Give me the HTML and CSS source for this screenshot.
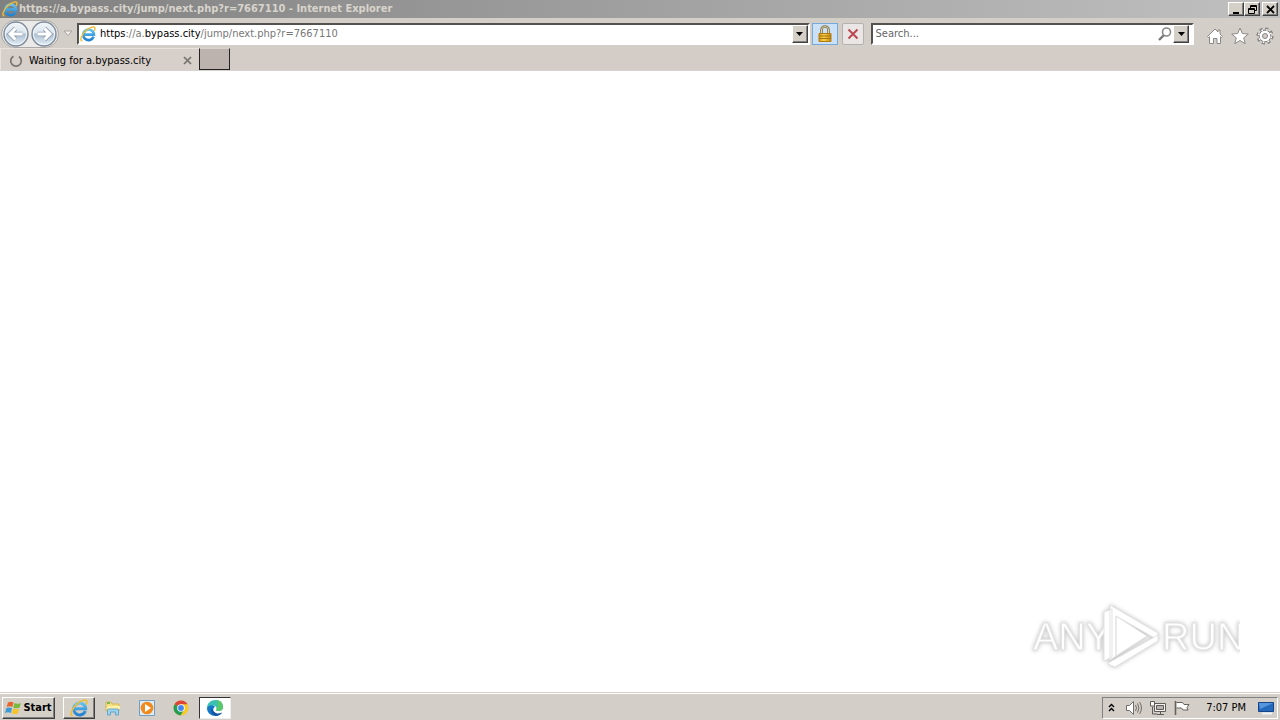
FILE: index.html
```html
<!DOCTYPE html>
<html lang="en">
<head>
<meta charset="utf-8">
<title>Internet Explorer</title>
<link rel="stylesheet" href="styles.css">
</head>
<body>
<svg width="0" height="0" class="defs" aria-hidden="true">
  <defs>
    <linearGradient id="blue" x1="0" y1="0" x2="0" y2="1"><stop offset="0" stop-color="#62c4f2"/><stop offset="1" stop-color="#2381cf"/></linearGradient>
    <linearGradient id="orb" x1="0" y1="0" x2="0" y2="1"><stop offset="0" stop-color="#f3f6f9"/><stop offset=".45" stop-color="#dce5ee"/><stop offset=".5" stop-color="#afbfd0"/><stop offset="1" stop-color="#e4f0f8"/></linearGradient>
    <linearGradient id="gold" x1="0" y1="0" x2="1" y2="0"><stop offset="0" stop-color="#d99a10"/><stop offset=".4" stop-color="#f8d24a"/><stop offset="1" stop-color="#c98a0c"/></linearGradient>
    <symbol id="ie" viewBox="0 0 16 16">
      <path d="M13.6 10.6A5.3 5.3 0 1 1 13.9 8.6H4" fill="none" stroke="url(#blue)" stroke-width="2.7"/>
      <path d="M2.3 14.8C-.8 14.8 1.600 8.600 6 4.600C10.200.8 14.800-.2 15 2.200C15.100 3.200 14.600 4.200 14 5" fill="none" stroke="#efbd32" stroke-width="1.400"/>
    </symbol>
    <symbol id="drop" viewBox="0 0 7 4"><path d="M0 0h7L3.500 4z" fill="#000"/></symbol>
  </defs>
</svg>
<div class="screen">
  <header class="titlebar">
    <svg class="i16"><use href="#ie"/></svg>
    <h1 class="title">https://a.bypass.city/jump/next.php?r=7667110 - Internet Explorer</h1>
    <div class="winbtns">
      <button class="raised winbtn" aria-label="Minimize"><svg width="11" height="9"><path d="M2 7h6v2H2z"/></svg></button>
      <button class="raised winbtn" aria-label="Restore"><svg width="11" height="9" fill="none" stroke="#000"><path d="M3.500 3V.5h6v5H8M3 1.500h7M1.500 3.500h6v5h-6zM1 4.500h7"/></svg></button>
      <button class="raised winbtn close" aria-label="Close"><svg width="11" height="9" fill="none" stroke="#000" stroke-width="1.800"><path d="M2 1l7 7M9 1L2 8"/></svg></button>
    </div>
  </header>
  <nav class="navbar">
    <div class="orbs">
      <button class="plain" aria-label="Back"><svg width="28" height="28" viewBox="0 0 28 28"><circle cx="14" cy="14" r="12" fill="url(#orb)" stroke="#7f8b98" stroke-width="1.400"/><circle cx="14" cy="14" r="10.600" fill="none" stroke="#eff7fc"/><path d="M20.500 14H8.500M13.500 8.500L8 14l5.500 5.500" fill="none" stroke="#8fa0b4" stroke-width="4.600"/><path d="M20.500 14H8.500M13.500 8.500L8 14l5.500 5.500" fill="none" stroke="#fff" stroke-width="3"/></svg></button>
      <button class="plain" aria-label="Forward"><svg width="28" height="28" viewBox="0 0 28 28"><circle cx="14" cy="14" r="12" fill="url(#orb)" stroke="#7f8b98" stroke-width="1.400"/><circle cx="14" cy="14" r="10.600" fill="none" stroke="#eff7fc"/><path d="M7.500 14h12M14.500 8.500L20 14l-5.500 5.500" fill="none" stroke="#8fa0b4" stroke-width="4.600"/><path d="M7.500 14h12M14.500 8.500L20 14l-5.500 5.500" fill="none" stroke="#fff" stroke-width="3"/></svg></button>
    </div>
    <button class="plain history" aria-label="Recent pages"><svg width="10" height="7"><path d="M1 1h8L5 5.500z" fill="#f2f0ee" stroke="#aaa5a0"/></svg></button>
    <div class="sunken address">
      <svg class="i16"><use href="#ie"/></svg>
      <div class="url" role="textbox" aria-label="Address" contenteditable="true" spellcheck="false"><span class="dark">https</span>://a.<span class="dark">bypass.city</span>/jump/next.php?r=7667110</div>
      <button class="raised dropbtn" aria-label="Show addresses"><svg width="7" height="4"><use href="#drop"/></svg></button>
    </div>
    <button class="tool lock" aria-label="Security report"><svg width="16" height="18" viewBox="0 0 16 18"><path d="M4.500 9V5a3.500 3.500 0 0 1 7 0v4" fill="none" stroke="#7d7149" stroke-width="2.600"/><path d="M4.500 9V5a3.500 3.500 0 0 1 7 0v4" fill="none" stroke="#ddd3a4"/><path d="M2 8.500h12v8H2z" fill="url(#gold)" stroke="#b27c10"/><path d="M2 11h12M2 13.500h12" stroke="#a87411"/></svg></button>
    <button class="tool stop" aria-label="Stop"><svg width="12" height="12"><path d="M1.500 1.500l9 9M10.500 1.500l-9 9" stroke="#bd4650" stroke-width="2"/></svg></button>
    <div class="sunken search">
      <input type="text" class="query" placeholder="Search..." aria-label="Search">
      <svg width="16" height="16" viewBox="0 0 16 16"><path d="M7 9l-5 5" stroke="#777" stroke-width="2.400"/><circle cx="9.500" cy="6" r="4" fill="#fff" stroke="#888" stroke-width="1.600"/></svg>
      <button class="raised dropbtn" aria-label="Search options"><svg width="7" height="4"><use href="#drop"/></svg></button>
    </div>
    <div class="commands">
      <button class="plain" aria-label="Home"><svg width="18" height="18" viewBox="0 0 18 18"><path d="M1.500 9.500L9 2l3 3V3h2v4l2.500 2.500-1 1-1-.8v6.800H11v-5H7.500v5h-4V9.700l-1 .8z" fill="#fff" stroke="#8b8987"/></svg></button>
      <button class="plain" aria-label="Favorites"><svg width="18" height="18" viewBox="0 0 18 18"><path d="M9 1l2.300 5.500 6 .5-4.600 3.900 1.500 5.800L9 13.500l-5.200 3.200 1.500-5.800L.7 7l6-.5z" fill="#fff" stroke="#8b8987"/></svg></button>
      <button class="plain" aria-label="Tools"><svg width="18" height="18" viewBox="0 0 18 18"><circle cx="9" cy="9" r="7" fill="none" stroke="#858381" stroke-width="3.200" stroke-dasharray="3 2.498"/><circle cx="9" cy="9" r="5.800" fill="#fff" stroke="#858381"/><circle cx="9" cy="9" r="6.300" fill="none" stroke="#fff" stroke-width="1.600" stroke-dasharray="1.500 3.448" stroke-dashoffset="-.5"/><circle cx="9" cy="9" r="2.500" fill="#d4cdc7" stroke="#858381"/></svg></button>
    </div>
  </nav>
  <div class="tabs">
    <div class="tab">
      <svg width="14" height="14" viewBox="0 0 14 14"><path d="M4.500 2.200A5.300 5.300 0 1 0 10 2.500" fill="none" stroke="#77736f" stroke-width="1.700"/></svg>
      <span class="tabname">Waiting for a.bypass.city</span>
      <button class="plain" aria-label="Close tab"><svg width="9" height="9"><path d="M1 1l7 7M8 1L1 8" stroke="#77736f" stroke-width="1.700"/></svg></button>
    </div>
    <button class="raised newtab" aria-label="New tab"></button>
  </div>
  <main class="page">
    <svg class="watermark" width="216" height="76" viewBox="0 0 216 76" role="img" aria-label="ANY RUN">
      <g class="mark">
        <text x="9" y="51">ANY</text>
        <g fill="#fff" stroke="#e3e3e3"><path d="M80 13l8-3v48l-8 4zM86 6l48 28v7L92 17v40l-6 4zM92 17l31 20-31 20z"/><path d="M86 63l48-27v6L91 68l-7-3z"/></g>
        <text x="138" y="51">RUN</text>
      </g>
    </svg>
  </main>
  <footer class="taskbar">
    <button class="raised start"><svg width="17" height="16" viewBox="0 0 17 16"><path d="M3 2.500Q6 .8 8.500 2.500L7.300 7Q4.500 5.500 1.700 7z" fill="#e8622c"/><path d="M9.500 3Q12.500 4.600 16 2.900L14.600 7.600Q11.500 9 8.300 7.400z" fill="#78b93b"/><path d="M1.400 8Q4.200 6.700 7 8.200L5.800 13Q3 11.500 0 13z" fill="#399bd8"/><path d="M8 8.500Q11 10 14.200 8.700L12.900 13.400Q9.800 14.800 6.800 13.200z" fill="#f6c32f"/></svg>Start</button>
    <div class="tasks">
      <button class="task raised" aria-label="Internet Explorer"><svg class="i18"><use href="#ie"/></svg></button>
      <button class="task" aria-label="Explorer"><svg width="18" height="18" viewBox="0 0 18 18"><path d="M2 3h5l1 2h7v7H2z" fill="#f5df83" stroke="#d5b84d"/><path d="M3 3h3v2H3z" fill="#76b85a"/><path d="M4 7h12v3H2z" fill="#fff0a6"/><path d="M3.500 16v-5q0-1 1-1h9q1 0 1 1v5h-3v-3h-5v3z" fill="#9bd2ed" stroke="#65a8cc"/></svg></button>
      <button class="task" aria-label="Media Player"><svg width="18" height="18" viewBox="0 0 18 18"><path d="M1.500 1.500h15v15h-15z" fill="#dcebf5" stroke="#729fc2"/><circle cx="9" cy="9" r="6.300" fill="#f18a1d"/><path d="M7 5l6 4-6 4z" fill="#fff"/></svg></button>
      <button class="task" aria-label="Chrome"><svg width="18" height="18" viewBox="0 0 18 18"><circle cx="9" cy="9" r="7.500" fill="#f9c927"/><path d="M9 9L2.500 5.250A7.500 7.500 0 0 1 15.500 5.250H9z" fill="#dc4437"/><path d="M2.500 5.250L9 9l3 2-3.500 5.500A7.500 7.500 0 0 1 2.500 5.250z" fill="#279c57"/><circle cx="9" cy="9" r="3.800" fill="#fff"/><circle cx="9" cy="9" r="2.900" fill="#4285ee"/></svg></button>
      <button class="task active" aria-label="Edge"><svg width="18" height="18" viewBox="0 0 18 18"><path d="M1 9C1 4 5 1 9.500 1S17 4 17 8c0 3-2 4-5 4-1.500 0-2-.5-1.500-1.500C11 8 9 6.500 7 6.500S2 8 1 9z" fill="#39c1b4"/><path d="M10 1c4.500 0 7 3 7 7 0 3-2 4-5 4-1.500 0-2-.5-1.500-1.500C11.500 6 13 4 10 1z" fill="#5bc76b"/><path d="M1 9c1-3 7-4 8-1-3 1-2 7 2.500 7 2 0 3.500-.8 4.500-1.500C13 19 1 18 1 9z" fill="#1678c8"/><path d="M6 9c-2 3 0 7 4 8 3-.3 5-1.700 6-3.500-5 2.500-9 0-10-4.500z" fill="#1553a0"/></svg></button>
    </div>
    <div class="tray">
      <button class="plain" aria-label="Show hidden icons"><svg width="7" height="9" fill="none" stroke="#000" stroke-width="1.400"><path d="M1 4l2.500-2.500L6 4M1 8l2.500-2.500L6 8"/></svg></button>
      <svg class="volume" width="18" height="16" viewBox="0 0 18 16" fill="none" stroke="#716d69"><path d="M1.500 5.500h3L8.500 1.500v13l-4-4h-3z" fill="#fff"/><path d="M10.500 5q2 3 0 6M12.500 3.500q3 4.500 0 9M14.500 2q4 6 0 12"/></svg>
      <svg width="18" height="16" viewBox="0 0 18 16" fill="none" stroke="#5f5b57"><path d="M5.500 3.500h11v8h-11z" fill="#f4f2ef"/><path d="M7.500 5.500h7v4h-7z" fill="#b8b3ae"/><path d="M8 14.500h7M11.500 12v2M3.500 7v7H8"/><path d="M1.500 1.500h4V6h-4z" fill="#fff"/></svg>
      <svg width="18" height="16" viewBox="0 0 18 16" fill="none" stroke="#65615d"><path d="M3.500 2.500h6l1.500 2h5l-2 3 1 2.500h-5l-1.500-2h-5" fill="#fff"/><path d="M2.500 1v14" stroke-width="1.600"/></svg>
      <time class="clock">7:07 PM</time>
      <svg class="desktop" width="18" height="16" viewBox="0 0 18 16"><path d="M1.500 2.500h15v9h-15z" fill="#2569bd" stroke="#17458a"/><path d="M2 3h14L3 9z" fill="#5796dd"/><path d="M5 13.500h10" stroke="#edf4fb" stroke-width="2"/></svg>
    </div>
  </footer>
</div>
</body>
</html>
```
FILE: styles.css
```css
* { box-sizing: border-box; }
body { margin: 0; background: #fff; font-family: "DejaVu Sans Condensed", "DejaVu Sans", sans-serif; font-size: 11px; line-height: 14px; color: #000; }
button { font: inherit; color: inherit; padding: 0; border: 0; background: none; display: flex; align-items: center; justify-content: center; flex-shrink: 0; }
svg { display: block; flex-shrink: 0; }
.defs { position: absolute; }
.screen { min-height: 100vh; display: flex; flex-direction: column; }
.i16 { width: 16px; height: 16px; }
.i18 { width: 18px; height: 18px; }
.raised { background: #d4d0c8; border: 1px solid; border-color: #fff #404040 #404040 #fff; box-shadow: inset -1px -1px #808080; }
.sunken { background: #fff; border: 2px solid; border-color: #54514e #fff #fff #54514e; }
.titlebar { height: 18px; display: flex; align-items: center; gap: 1px; padding: 0 2px; background: linear-gradient(90deg, #808080, #c0c0c0); }
.title { flex: 1; min-width: 0; margin: 0; font-size: 11px; line-height: 16px; color: #d8d4cc; white-space: nowrap; overflow: hidden; }
.winbtns { display: flex; }
.winbtn { width: 16px; height: 14px; }
.close { margin-left: 2px; }
.navbar { height: 30px; display: flex; align-items: center; background: #d4cec8; border-top: 1px solid #d0d0c5; padding: 0 6px 0 1px; }
.orbs { display: flex; background: #eceae9; border: 1px solid #aaa8a6; border-radius: 14px; height: 28px; align-items: center; }
.history { width: 18px; }
.address { flex: 738 1 0; min-width: 0; height: 22px; display: flex; align-items: center; gap: 4px; padding-left: 1px; }
.url { flex: 1; color: #777; white-space: nowrap; overflow: hidden; outline: none; }
.dark { color: #000; }
.dropbtn { width: 16px; height: 18px; }
.tool { height: 22px; border: 1px solid #b5b1ae; background: #e9e6e5; border-radius: 2px; }
.lock { width: 26px; margin: 0 4px 0 2px; border: 1px solid #76a9dc; background: #cce0f8; border-radius: 0; }
.stop { width: 22px; margin-right: 7px; }
.search { flex: 318 1 0; min-width: 0; height: 22px; display: flex; align-items: center; padding: 0 3px; }
.query { flex: 1; min-width: 0; border: 0; padding: 0; font: inherit; outline: none; background: none; }
.query::placeholder { color: #666; opacity: 1; }
.commands { display: flex; gap: 7px; padding: 4px 0 0 12px; }
.tabs { height: 23px; display: flex; background: #d4cdc7; border-bottom: 1px solid #d6d1ce; }
.tab { width: 199px; display: flex; align-items: center; gap: 6px; padding: 2px 7px 0 8px; background: #d6cfca; border: solid #e7e3df; border-width: 1px 0 0 1px; }
.tabname { flex: 1; white-space: nowrap; }
.newtab { width: 31px; background: #bcb3ae; border-color: #d6d1ce #222 #222 #222; box-shadow: none; }
.page { flex: 1; display: flex; align-items: flex-end; justify-content: flex-end; padding: 0 40px 18px; }
.mark { filter: drop-shadow(0 0 2px #bbb); }
.watermark text { font-family: "Liberation Sans Narrow", "Liberation Sans", sans-serif; font-size: 38px; fill: #fff; stroke: #e3e3e3; }
.taskbar { height: 27px; display: flex; align-items: center; gap: 8px; padding: 2px 2px 1px; background: #d4cec8; box-shadow: 0 -1px #d4d0c8; border-top: 1px solid #fff; }
.start { width: 53px; height: 22px; font-weight: bold; gap: 1px; }
.tasks { flex: 1; display: flex; gap: 2px; }
.task { width: 32px; height: 22px; }
.active { background: #fff; border: 1px solid; border-color: #333 #eee #eee #333; }
.tray { height: 22px; display: flex; align-items: center; padding: 0 2px 0 5px; gap: 6px; border: 1px solid; border-color: #808080 #fff #fff #808080; }
.volume { margin-left: 4px; }
.clock { margin: 0 5px 0 9px; }
```
